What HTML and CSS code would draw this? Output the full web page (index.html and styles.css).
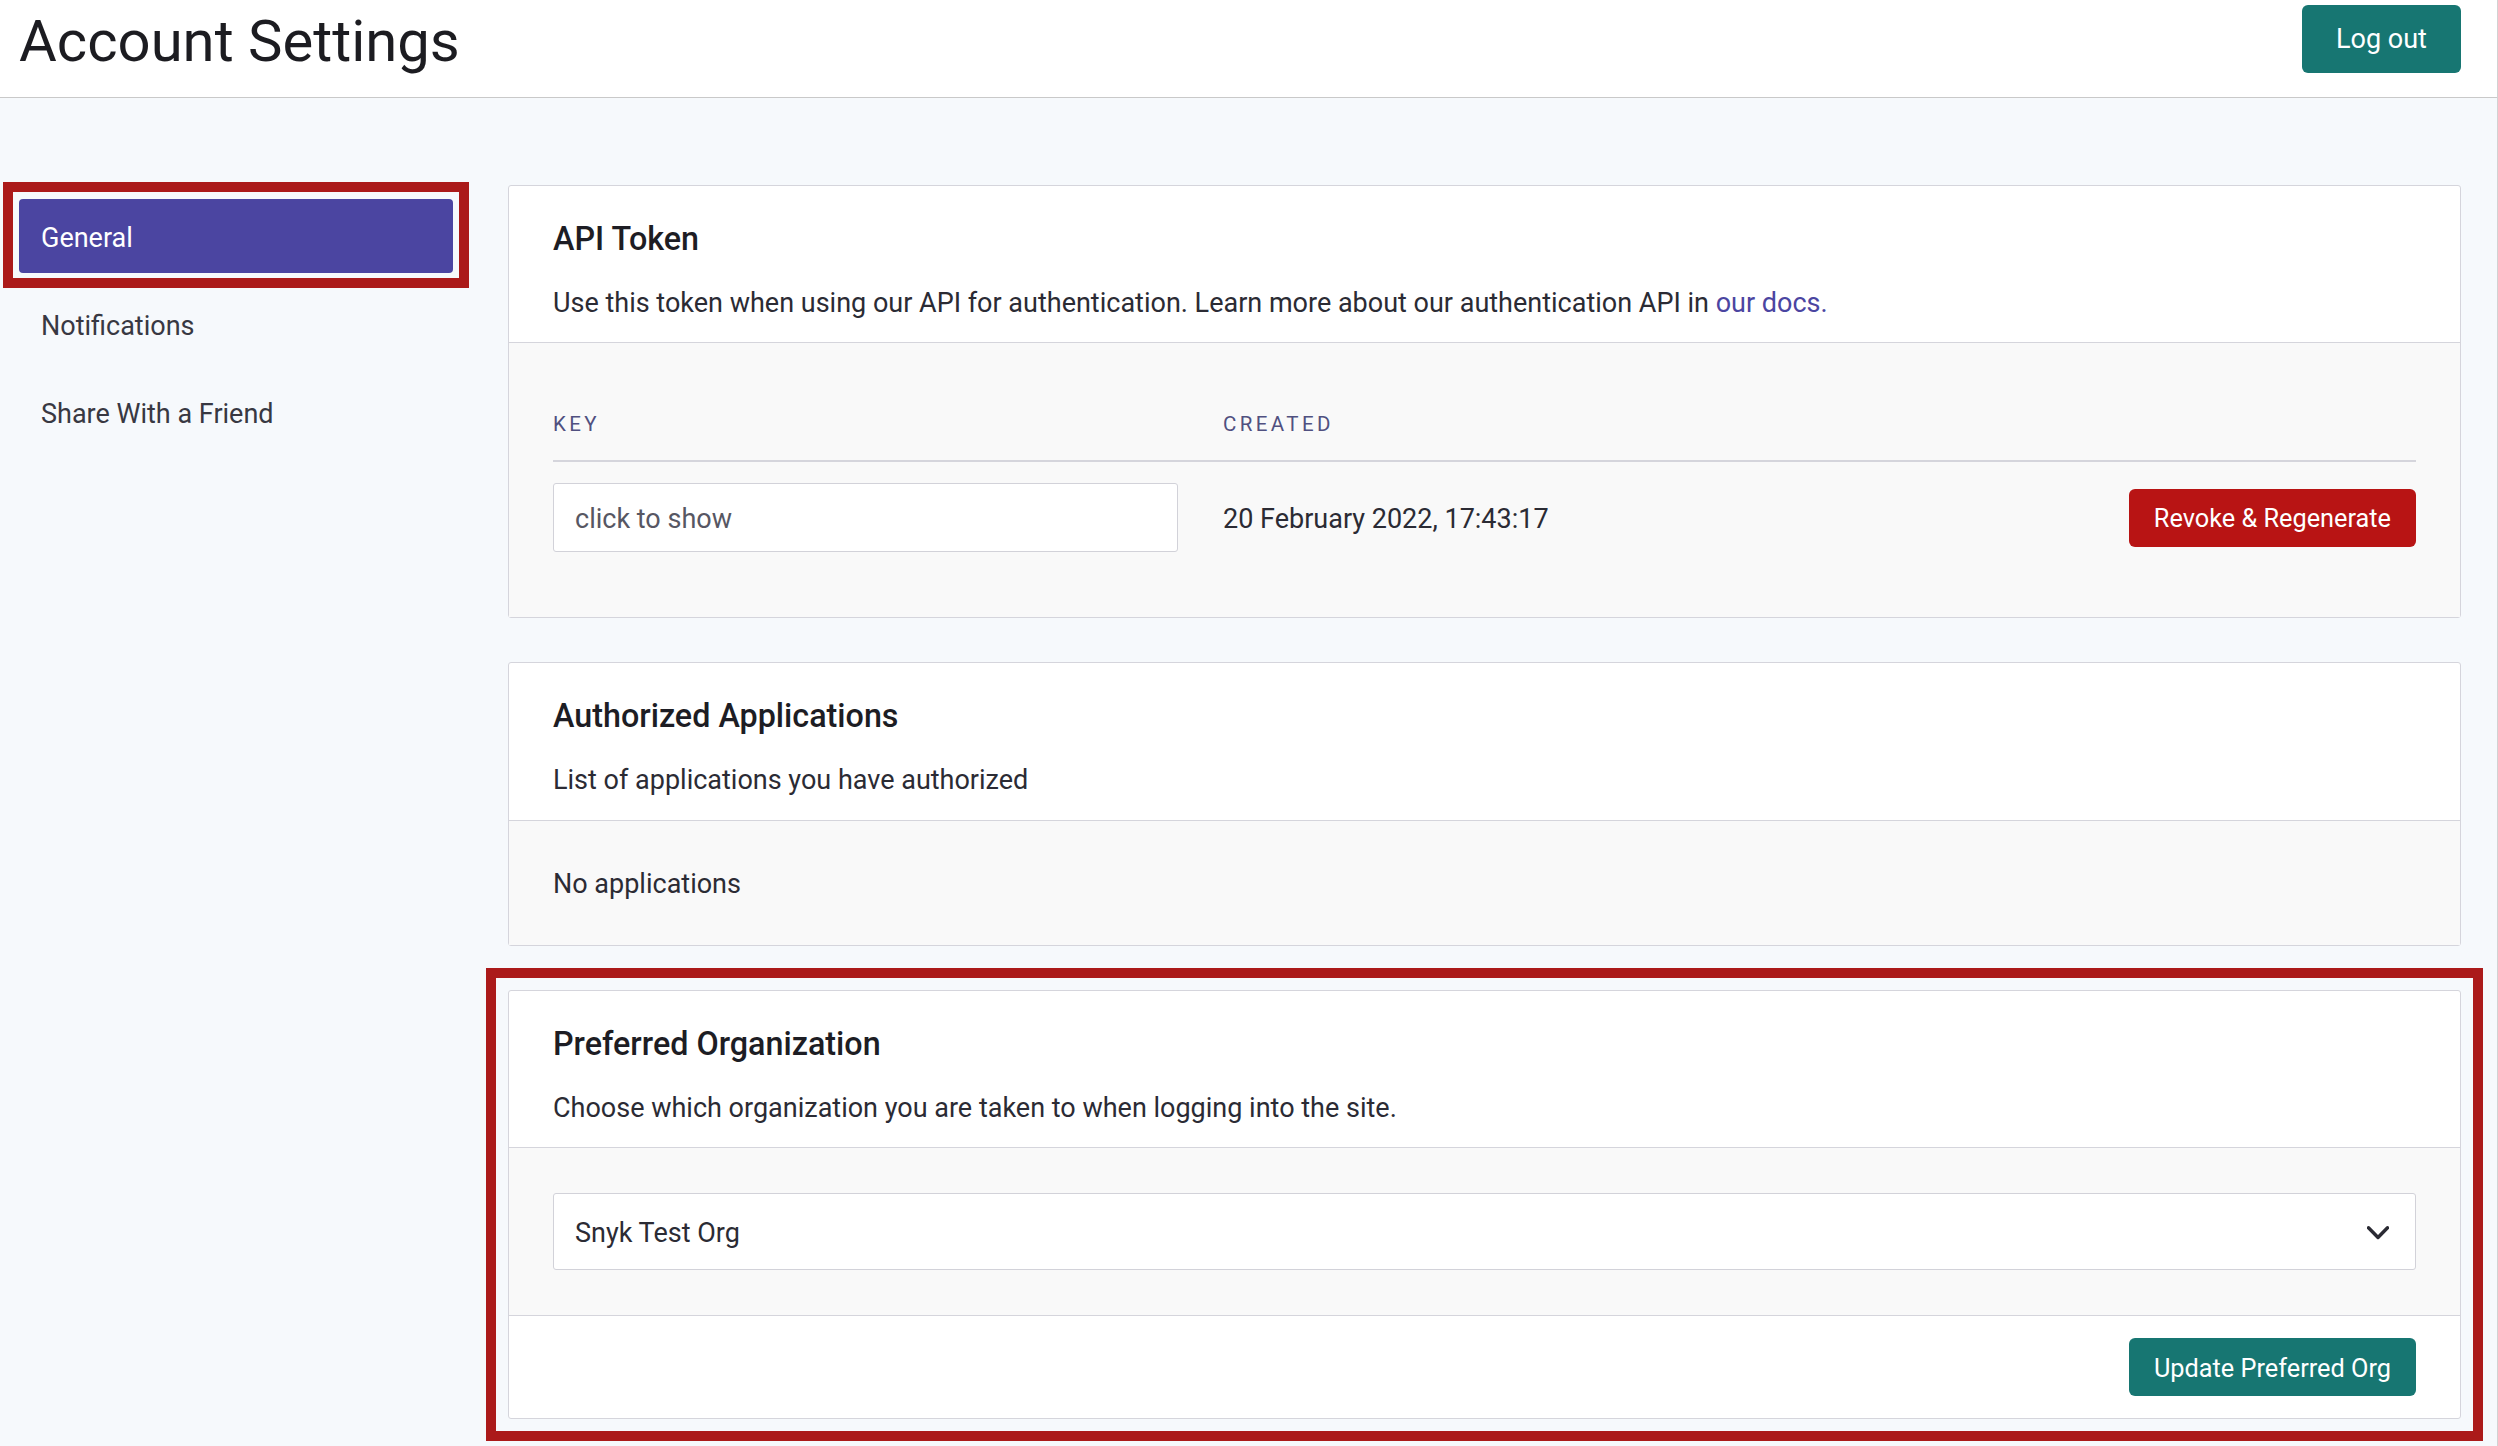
FILE: index.html
```html
<!DOCTYPE html>
<html lang="en">
<head>
<meta charset="utf-8">
<title>Account Settings</title>
<link rel="stylesheet" href="styles.css">
</head>
<body>
<div class="page">
  <header class="topbar">
    <h1 class="page-title">Account Settings</h1>
    <button class="btn btn-teal btn-logout" type="button">Log out</button>
  </header>
  <div class="layout">
    <nav class="sidenav">
      <a class="nav-item is-active marked marked-nav">General</a>
      <a class="nav-item">Notifications</a>
      <a class="nav-item">Share With a Friend</a>
    </nav>
    <main class="content">
      <section class="card">
        <div class="card-head">
          <h2 class="card-title">API Token</h2>
          <p class="card-desc">Use this token when using our API for authentication. Learn more about our authentication API in <a class="link">our docs.</a></p>
        </div>
        <div class="card-body token-body">
          <div class="token-grid">
            <div class="th">KEY</div>
            <div class="th">CREATED</div>
            <div class="th">&nbsp;</div>
            <div class="td"><div class="fake-input">click to show</div></div>
            <div class="td date">20 February 2022, 17:43:17</div>
            <div class="td td-end"><button class="btn btn-red" type="button">Revoke &amp; Regenerate</button></div>
          </div>
        </div>
      </section>

      <section class="card">
        <div class="card-head">
          <h2 class="card-title">Authorized Applications</h2>
          <p class="card-desc">List of applications you have authorized</p>
        </div>
        <div class="card-body apps-body">
          <p class="plain">No applications</p>
        </div>
      </section>

      <section class="card marked marked-card">
        <div class="card-head">
          <h2 class="card-title">Preferred Organization</h2>
          <p class="card-desc">Choose which organization you are taken to when logging into the site.</p>
        </div>
        <div class="card-body org-body">
          <div class="select">
            <span class="select-value">Snyk Test Org</span>
            <svg class="chevron" width="22" height="14" viewBox="0 0 22 14" aria-hidden="true"><polyline points="1.5,1.8 11,11.5 20.5,1.8" fill="none" stroke="#2a2a33" stroke-width="3.4" stroke-linecap="round" stroke-linejoin="round"/></svg>
          </div>
        </div>
        <div class="card-foot">
          <button class="btn btn-teal" type="button">Update Preferred Org</button>
        </div>
      </section>
    </main>
  </div>
</div>
</body>
</html>
```
FILE: styles.css
```css
* { box-sizing: border-box; }

html, body {
  margin: 0;
  padding: 0;
}

body {
  font-family: Roboto, "Liberation Sans", Arial, sans-serif;
  background: #f6f9fc;
  color: #2b2b34;
  font-size: 27px;
}

.page {
  min-height: 1446px;
  border-right: 1px solid #d2d2d2;
}

.topbar {
  display: flex;
  justify-content: space-between;
  align-items: flex-start;
  height: 98px;
  background: #ffffff;
  border-bottom: 1px solid #c9c9c9;
  padding: 0 36px 0 19px;
}

.page-title {
  margin: 13px 0 0 0;
  font-size: 58px;
  line-height: 57px;
  font-weight: 400;
  color: #1c1c21;
}

.btn {
  font-family: Roboto, "Liberation Sans", Arial, sans-serif;
  border: 0;
  color: #ffffff;
  border-radius: 6px;
  cursor: pointer;
  white-space: nowrap;
}

.btn-teal { background: #177672; }
.btn-red { background: #b81414; }

.btn-logout {
  margin-top: 5px;
  width: 159px;
  height: 68px;
  font-size: 27px;
  padding: 0;
}

.card-foot .btn,
.btn-red {
  height: 58px;
  padding: 2px 25px 0 25px;
  font-size: 25.3px;
}

.layout {
  display: flex;
  align-items: flex-start;
  padding-top: 87px;
}

.sidenav {
  width: 453px;
  flex: none;
  padding-left: 19px;
  margin-top: 14px;
  display: flex;
  flex-direction: column;
  gap: 14px;
}

.nav-item {
  display: flex;
  align-items: center;
  height: 74px;
  padding-left: 22px;
  padding-top: 3px;
  border-radius: 4px;
  color: #383842;
  font-size: 27px;
  text-decoration: none;
}

.nav-item.is-active {
  background: #4b45a1;
  color: #ffffff;
}

.marked { position: relative; }

.marked::after {
  content: "";
  position: absolute;
  border: 10px solid #ab1a1a;
  pointer-events: none;
}

.marked-nav::after {
  top: -17px;
  bottom: -15px;
  left: -16px;
  right: -16px;
}

.marked-card::after {
  top: -23px;
  bottom: -23px;
  left: -23px;
  right: -23px;
}

.content {
  flex: 1;
  margin-left: 55px;
  margin-right: 36px;
  display: flex;
  flex-direction: column;
  gap: 44px;
  padding-bottom: 40px;
}

.card {
  background: #ffffff;
  border: 1px solid #d5d5dc;
  border-radius: 3px;
}

.card-head {
  padding: 29px 44px 20px 44px;
  border-bottom: 1px solid #d5d5dc;
}

.card-title {
  margin: 0;
  font-size: 32.3px;
  line-height: 48px;
  font-weight: 500;
  color: #1d1d24;
}

.card-desc {
  margin: 21px 0 0 0;
  font-size: 27px;
  line-height: 38.25px;
  color: #2b2b34;
}

.link {
  color: #4b45a1;
  text-decoration: none;
}

.card-body {
  background: #f9f9f9;
  padding: 0 44px;
}

.token-body {
  padding-top: 66px;
  padding-bottom: 65px;
}

.token-grid {
  display: grid;
  grid-template-columns: 670px 1fr auto;
  align-items: center;
}

.th {
  font-size: 20.5px;
  line-height: 30px;
  height: 53px;
  letter-spacing: 3.4px;
  color: #505080;
  padding-bottom: 21px;
  border-bottom: 2px solid #d5d5dc;
}

.td {
  padding-top: 21px;
  font-size: 27px;
}

.td-end {
  display: flex;
  justify-content: flex-end;
}

.fake-input {
  width: 625px;
  height: 69px;
  display: flex;
  align-items: center;
  padding-left: 21px;
  padding-top: 3px;
  background: #ffffff;
  border: 1px solid #d2d2d9;
  border-radius: 3px;
  color: #575763;
}

.date {
  color: #2b2b34;
  padding-top: 24px;
}

.apps-body {
  padding-top: 44px;
  padding-bottom: 42px;
}

.plain {
  margin: 0;
  line-height: 38.25px;
}

.org-body {
  padding-top: 45px;
  padding-bottom: 45px;
  border-bottom: 1px solid #d5d5dc;
}

.select {
  height: 77px;
  display: flex;
  align-items: center;
  justify-content: space-between;
  padding: 2px 26px 0 21px;
  background: #ffffff;
  border: 1px solid #d2d2d9;
  border-radius: 3px;
  color: #2b2b34;
}

.chevron { display: block; }

.card-foot {
  display: flex;
  justify-content: flex-end;
  padding: 22px 44px;
}
```
